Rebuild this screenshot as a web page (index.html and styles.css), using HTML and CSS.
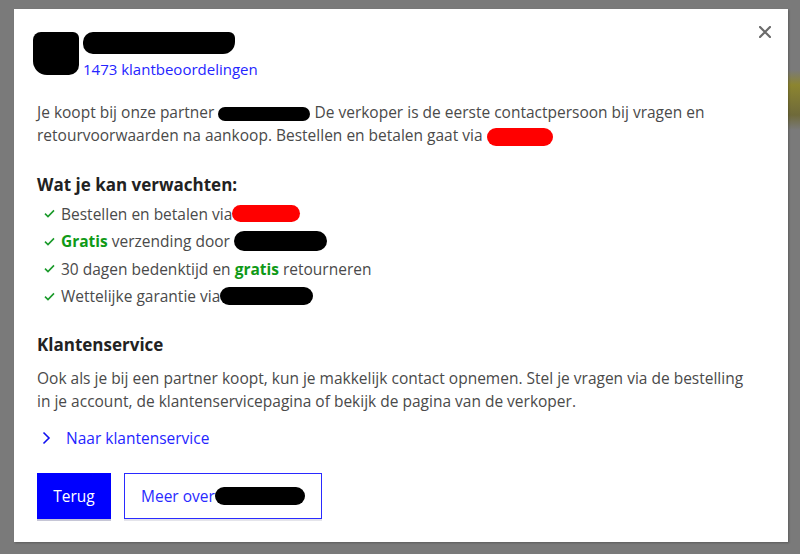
FILE: index.html
```html
<!DOCTYPE html>
<html lang="nl">
<head>
<meta charset="utf-8">
<link rel="stylesheet" href="styles.css">
</head>
<body>
<div class="overlay">
  <div class="modal">
    <button class="close" aria-label="Sluiten">
      <svg width="12" height="12" viewBox="0 0 12 12"><path d="M1 1L11 11M11 1L1 11" stroke="#6b6b6b" stroke-width="2.2" stroke-linecap="round"/></svg>
    </button>
    <div class="header">
      <span class="logo-blot"></span>
      <div class="header-text">
        <span class="name-blot"></span>
        <a class="reviews" href="#">1473 klantbeoordelingen</a>
      </div>
    </div>
    <p class="intro"><span>Je koopt bij onze partner</span> <span class="blot blot-black b1"></span> <span>De verkoper is de eerste contactpersoon bij vragen en</span><br><span>retourvoorwaarden na aankoop. Bestellen en betalen gaat via</span> <span class="blot blot-red b2"></span></p>

    <h2 class="title">Wat je kan verwachten:</h2>
    <ul class="checks">
      <li><span class="check"><svg width="11" height="9" viewBox="0 0 11 9"><path d="M1 4.6L4 7.6L10 1.4" fill="none" stroke="#1a9a2a" stroke-width="1.6"/></svg></span>Bestellen en betalen via<span class="blot blot-red b3"></span></li>
      <li><span class="check"><svg width="11" height="9" viewBox="0 0 11 9"><path d="M1 4.6L4 7.6L10 1.4" fill="none" stroke="#1a9a2a" stroke-width="1.6"/></svg></span><strong class="green">Gratis</strong>&nbsp;verzending door&nbsp;<span class="blot blot-black b4"></span></li>
      <li><span class="check"><svg width="11" height="9" viewBox="0 0 11 9"><path d="M1 4.6L4 7.6L10 1.4" fill="none" stroke="#1a9a2a" stroke-width="1.6"/></svg></span>30 dagen bedenktijd en&nbsp;<strong class="green">gratis</strong>&nbsp;retourneren</li>
      <li><span class="check"><svg width="11" height="9" viewBox="0 0 11 9"><path d="M1 4.6L4 7.6L10 1.4" fill="none" stroke="#1a9a2a" stroke-width="1.6"/></svg></span>Wettelijke garantie via<span class="blot blot-black b5"></span></li>
    </ul>

    <h2 class="title service">Klantenservice</h2>
    <p class="service-text">Ook als je bij een partner koopt, kun je makkelijk contact opnemen. Stel je vragen via de bestelling in je account, de klantenservicepagina of bekijk de pagina van de verkoper.</p>
    <a class="service-link" href="#"><svg width="9" height="14" viewBox="0 0 9 14"><path d="M1.5 1.5L7 7L1.5 12.5" fill="none" stroke="#1010f0" stroke-width="1.6"/></svg><span>Naar klantenservice</span></a>

    <div class="actions">
      <button class="btn btn-primary">Terug</button>
      <button class="btn btn-secondary">Meer over<span class="blot blot-black b6"></span></button>
    </div>
  </div>
</div>
</body>
</html>
```

FILE: styles.css
```css
* { box-sizing: border-box; }
html, body { margin: 0; padding: 0; }
body {
  width: 800px;
  height: 554px;
  overflow: hidden;
  background:
    linear-gradient(to bottom, transparent 70px, #8c8530 85px, #6f6a3a 115px, transparent 130px) right top / 14px 100% no-repeat,
    #7a7a7a;
  font-family: "Open Sans", "Liberation Sans", sans-serif;
  color: #4a4a4a;
}
.overlay {
  display: flex;
  padding: 9px 0 0 14px;
}
.modal {
  position: relative;
  width: 774px;
  height: 533px;
  background: #fff;
  padding: 21px 23px 23px 23px;
  box-shadow: 1px 1px 2px rgba(0,0,0,0.25);
}
.close {
  position: absolute;
  top: 17px;
  right: 17px;
  border: 0;
  background: none;
  padding: 0;
  width: 12px;
  height: 12px;
  display: flex;
}
.header {
  display: flex;
  align-items: flex-start;
}
.logo-blot {
  width: 46px;
  height: 43px;
  background: #000;
  border-radius: 8px 6px 10px 14px;
  margin: 2px 0 0 -4px;
  flex: none;
}
.header-text {
  display: flex;
  flex-direction: column;
  margin-left: 4px;
}
.name-blot {
  width: 152px;
  height: 22px;
  margin-top: 2px;
  background: #000;
  border-radius: 10px 6px 12px 10px;
}
.reviews {
  color: #2525ff;
  text-decoration: none;
  font-size: 15px;
  line-height: 20px;
  margin-top: 5px;
}
.intro {
  margin: 22px 0 0;
  font-size: 15.5px;
  line-height: 23px;
  width: 700px;
}
.blot {
  display: inline-block;
  vertical-align: middle;
  border-radius: 10px;
}
.blot-black { background: #000; }
.blot-red { background: #ff0000; }
.b1 { width: 92px; height: 14px; }
.b2 { width: 66px; height: 18px; }
.b3 { width: 68px; height: 17px; }
.b4 { width: 93px; height: 20px; }
.b5 { width: 93px; height: 18px; }
.b6 { width: 90px; height: 18px; }
.title {
  margin: 26px 0 0;
  font-size: 17px;
  line-height: 24px;
  font-weight: 700;
  color: #222;
}
.checks {
  list-style: none;
  margin: 3px 0 0;
  padding: 0 0 0 7px;
}
.checks li {
  display: flex;
  align-items: center;
  height: 27.5px;
  font-size: 15.5px;
}
.check {
  display: flex;
  width: 17px;
  flex: none;
}
.green {
  color: #0f9a17;
  font-weight: 700;
}
.service { margin-top: 23px; }
.service-text {
  margin: 10px 0 0;
  font-size: 15.5px;
  line-height: 23px;
  width: 715px;
}
.service-link {
  display: flex;
  align-items: center;
  gap: 15px;
  margin: 13px 0 0 5px;
  height: 24px;
  color: #2525ff;
  text-decoration: none;
  font-size: 15.5px;
}
.actions {
  display: flex;
  gap: 13px;
  margin-top: 23px;
}
.btn {
  height: 46px;
  font-family: inherit;
  font-size: 15.5px;
  padding: 0;
  display: flex;
  align-items: center;
  justify-content: center;
}
.btn-primary {
  width: 74px;
  background: #0000ff;
  color: #fff;
  border: 0;
  box-shadow: 0 2px 0 #c6c6d6;
}
.btn-secondary {
  width: 198px;
  background: #fff;
  color: #2a2aff;
  border: 1px solid #2a2aff;
  justify-content: flex-start;
  padding-left: 16px;
  box-shadow: 0 2px 0 #e4e4ea;
}
```
